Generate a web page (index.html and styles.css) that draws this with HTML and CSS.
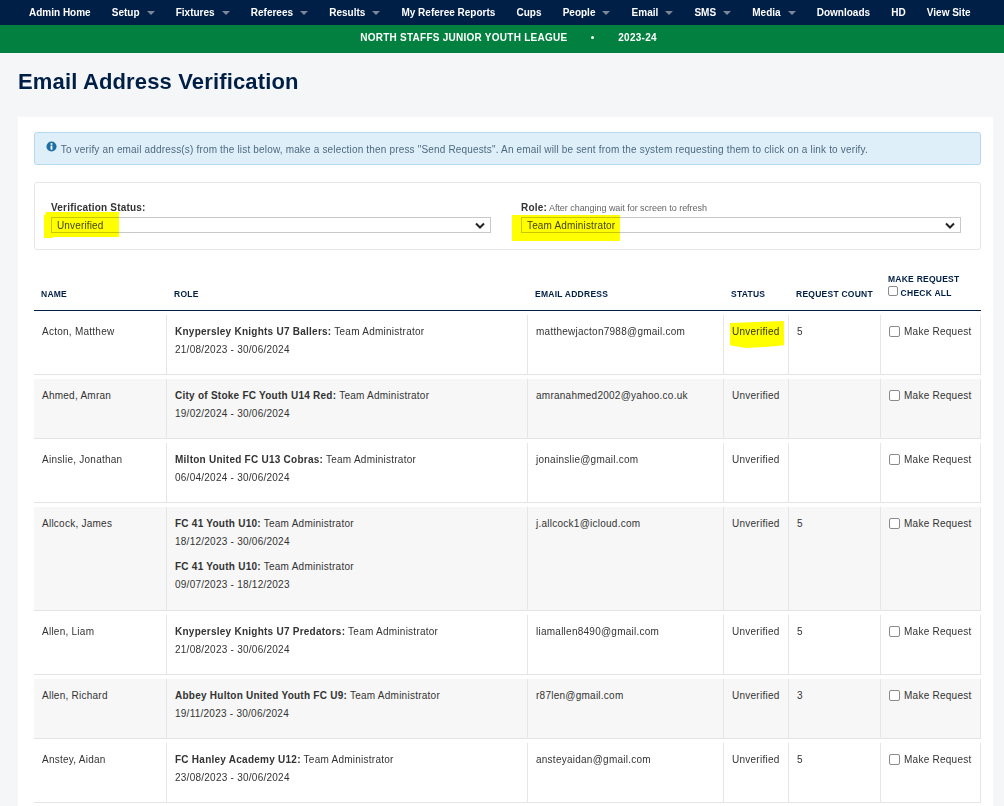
FILE: index.html
```html
<!DOCTYPE html>
<html lang="en">
<head>
    <meta charset="UTF-8">
    <meta name="viewport" content="width=device-width, initial-scale=1.0">
    <title>Email Address Verification</title>
    <link rel="stylesheet" href="styles.css">
</head>
<body>
    <nav class="topnav">
        <a>Admin Home</a>
        <a class="drop">Setup</a>
        <a class="drop">Fixtures</a>
        <a class="drop">Referees</a>
        <a class="drop">Results</a>
        <a>My Referee Reports</a>
        <a>Cups</a>
        <a class="drop">People</a>
        <a class="drop">Email</a>
        <a class="drop">SMS</a>
        <a class="drop">Media</a>
        <a>Downloads</a>
        <a>HD</a>
        <a>View Site</a>
    </nav>
    <div class="league-bar">
        <span>NORTH STAFFS JUNIOR YOUTH LEAGUE</span>
        <span class="dot"></span>
        <span>2023-24</span>
    </div>
    <h1 class="page-title">Email Address Verification</h1>

    <div class="panel">
        <div class="info-box">
            <svg class="info-icon" viewBox="0 0 12 12"><circle cx="6" cy="6" r="5.5" fill="#1c6ea4"/><rect x="5" y="5" width="2" height="4.5" fill="#fff"/><rect x="5" y="2.4" width="2" height="1.8" fill="#fff"/></svg>
            To verify an email address(s) from the list below, make a selection then press "Send Requests". An email will be sent from the system requesting them to click on a link to verify.
        </div>

        <div class="filters">
            <div class="filter">
                <label class="filter-label"><b>Verification Status:</b></label>
                <div class="fake-select">Unverified<svg viewBox="0 0 10 7"><path d="M1 1.5l4 4 4-4" fill="none" stroke="#222" stroke-width="2"/></svg></div>
            </div>
            <div class="filter">
                <label class="filter-label"><b>Role:</b> After changing wait for screen to refresh</label>
                <div class="fake-select">Team Administrator<svg viewBox="0 0 10 7"><path d="M1 1.5l4 4 4-4" fill="none" stroke="#222" stroke-width="2"/></svg></div>
            </div>
            <i class="marker mark-status"></i>
            <i class="marker mark-role"></i>
        </div>

        <table class="verify-table">
            <thead>
                <tr>
                    <th class="col-name">NAME</th>
                    <th class="col-role">ROLE</th>
                    <th class="col-email">EMAIL ADDRESS</th>
                    <th class="col-status">STATUS</th>
                    <th class="col-count">REQUEST COUNT</th>
                    <th class="col-make">MAKE REQUEST<br><input type="checkbox"> CHECK ALL</th>
                </tr>
            </thead>
            <tbody>
                <tr>
                    <td>Acton, Matthew</td>
                    <td><p><b>Knypersley Knights U7 Ballers:</b> Team Administrator<br>21/08/2023 - 30/06/2024</p></td>
                    <td>matthewjacton7988@gmail.com</td>
                    <td><i class="marker mark-cell"></i>Unverified</td>
                    <td>5</td>
                    <td><input type="checkbox"> Make Request</td>
                </tr>
                <tr>
                    <td>Ahmed, Amran</td>
                    <td><p><b>City of Stoke FC Youth U14 Red:</b> Team Administrator<br>19/02/2024 - 30/06/2024</p></td>
                    <td>amranahmed2002@yahoo.co.uk</td>
                    <td>Unverified</td>
                    <td></td>
                    <td><input type="checkbox"> Make Request</td>
                </tr>
                <tr>
                    <td>Ainslie, Jonathan</td>
                    <td><p><b>Milton United FC U13 Cobras:</b> Team Administrator<br>06/04/2024 - 30/06/2024</p></td>
                    <td>jonainslie@gmail.com</td>
                    <td>Unverified</td>
                    <td></td>
                    <td><input type="checkbox"> Make Request</td>
                </tr>
                <tr>
                    <td>Allcock, James</td>
                    <td>
                        <p><b>FC 41 Youth U10:</b> Team Administrator<br>18/12/2023 - 30/06/2024</p>
                        <p><b>FC 41 Youth U10:</b> Team Administrator<br>09/07/2023 - 18/12/2023</p>
                    </td>
                    <td>j.allcock1@icloud.com</td>
                    <td>Unverified</td>
                    <td>5</td>
                    <td><input type="checkbox"> Make Request</td>
                </tr>
                <tr>
                    <td>Allen, Liam</td>
                    <td><p><b>Knypersley Knights U7 Predators:</b> Team Administrator<br>21/08/2023 - 30/06/2024</p></td>
                    <td>liamallen8490@gmail.com</td>
                    <td>Unverified</td>
                    <td>5</td>
                    <td><input type="checkbox"> Make Request</td>
                </tr>
                <tr>
                    <td>Allen, Richard</td>
                    <td><p><b>Abbey Hulton United Youth FC U9:</b> Team Administrator<br>19/11/2023 - 30/06/2024</p></td>
                    <td>r87len@gmail.com</td>
                    <td>Unverified</td>
                    <td>3</td>
                    <td><input type="checkbox"> Make Request</td>
                </tr>
                <tr>
                    <td>Anstey, Aidan</td>
                    <td><p><b>FC Hanley Academy U12:</b> Team Administrator<br>23/08/2023 - 30/06/2024</p></td>
                    <td>ansteyaidan@gmail.com</td>
                    <td>Unverified</td>
                    <td>5</td>
                    <td><input type="checkbox"> Make Request</td>
                </tr>
            </tbody>
        </table>
    </div>
</body>
</html>
```

FILE: styles.css
```css
html, body {
    height: 806px;
    overflow: hidden;
}
body {
    margin: 0;
    background: #f5f6f8;
    font-family: "Liberation Sans", Arial, sans-serif;
    font-size: 10px;
    letter-spacing: 0.25px;
    color: #333;
}
.topnav {
    display: flex;
    align-items: center;
    height: 25px;
    padding-left: 29px;
    background: #001f47;
    gap: 21.15px;
}
.topnav a {
    color: #fff;
    font-size: 10px;
    font-weight: bold;
    letter-spacing: 0;
    white-space: nowrap;
}
.topnav .drop::after {
    content: "";
    display: inline-block;
    margin-left: 7px;
    vertical-align: 1px;
    border-top: 4px solid #7d8798;
    border-left: 4px solid transparent;
    border-right: 4px solid transparent;
}
.league-bar {
    display: flex;
    align-items: center;
    justify-content: center;
    height: 28px;
    box-sizing: border-box;
    padding: 0 0 3px 13px;
    background: #02803f;
    color: #fff;
    font-size: 10px;
    font-weight: bold;
    gap: 24px;
}
.league-bar .dot {
    width: 3px;
    height: 3px;
    border-radius: 50%;
    background: #fff;
}
.page-title {
    margin: 16px 0 22px 18px;
    font-size: 22px;
    line-height: 26px;
    letter-spacing: 0.15px;
    color: #001f47;
}
.panel {
    margin-left: 18px;
    width: 975px;
    box-sizing: border-box;
    padding: 15px 12px 40px 16px;
    background: #fff;
}
.info-box {
    height: 33px;
    box-sizing: border-box;
    padding: 8px 11px;
    background: #dfeff9;
    border: 1px solid #b4d9f1;
    border-radius: 3px;
    color: #4d6a80;
    font-size: 10px;
    letter-spacing: 0.17px;
    line-height: 14px;
    white-space: nowrap;
}
.info-icon {
    width: 11px;
    height: 11px;
    margin-right: 1px;
    vertical-align: 1px;
}
.filters {
    position: relative;
    display: flex;
    gap: 30px;
    height: 68px;
    box-sizing: border-box;
    margin-top: 17px;
    padding: 19px 19px 0 16px;
    border: 1px solid #e6e6e6;
    border-radius: 3px;
}
.filter {
    flex: 1;
}
.filter-label {
    display: block;
    height: 15px;
    font-size: 9px;
    letter-spacing: -0.04px;
    line-height: 11px;
    color: #666;
}
.filter-label b {
    font-size: 10px;
    letter-spacing: 0.2px;
    color: #333;
}
.fake-select {
    display: flex;
    align-items: center;
    justify-content: space-between;
    height: 16px;
    box-sizing: border-box;
    padding: 0 5px;
    border: 1px solid #c8c8c8;
    background: #fff;
    color: #444;
    font-size: 10px;
    letter-spacing: 0.15px;
}
.fake-select svg {
    width: 10px;
    height: 7px;
}
.marker {
    position: absolute;
    background: #ffff00;
    mix-blend-mode: multiply;
}
.mark-status {
    left: 9px;
    top: 29px;
    width: 75px;
    height: 26px;
    clip-path: polygon(2% 0, 100% 0, 100% 96%, 12% 96%, 12% 100%, 0 100%, 0 12%, 2% 12%);
}
.mark-role {
    left: 477px;
    top: 32px;
    width: 108px;
    height: 26px;
}
.verify-table {
    width: 947px;
    margin-top: 22px;
    border-collapse: separate;
    border-spacing: 0;
    table-layout: fixed;
}
.verify-table th {
    padding: 0 7px 9px;
    border-bottom: 1px solid #001f47;
    color: #001f47;
    font-size: 8.5px;
    line-height: 14px;
    text-align: left;
    vertical-align: bottom;
}
.verify-table input {
    appearance: none;
    box-sizing: border-box;
    margin: 0;
    background: #fff;
    border: 1px solid #8a8a8a;
    border-radius: 2px;
}
.verify-table th input {
    width: 10px;
    height: 10px;
}
.col-name { width: 119px; }
.col-role { width: 347px; }
.col-email { width: 182px; }
.col-status { width: 51px; }
.col-count { width: 78px; }
.verify-table th.col-make {
    padding-bottom: 10px;
}
.verify-table tbody tr:nth-child(even) td {
    background: #f7f7f7;
}
.verify-table td {
    position: relative;
    padding: 12px 8px 8px;
    height: 43px;
    border-bottom: 1px solid #e4e4e4;
    vertical-align: top;
    line-height: 18px;
    box-shadow: inset 0 4px 0 #fff, inset -1px 0 0 #e6e6e6;
}
.verify-table td p {
    margin: 0 0 7px;
}
.verify-table td p + p {
    margin-bottom: 8px;
}
.verify-table td input {
    width: 11px;
    height: 11px;
    margin: 3px 1px 0 0;
    vertical-align: top;
}
.mark-cell {
    left: 6px;
    top: 10px;
    width: 54px;
    height: 27px;
    clip-path: polygon(0 7%, 100% 0, 100% 90%, 65% 96%, 30% 100%, 0 90%);
}
```
